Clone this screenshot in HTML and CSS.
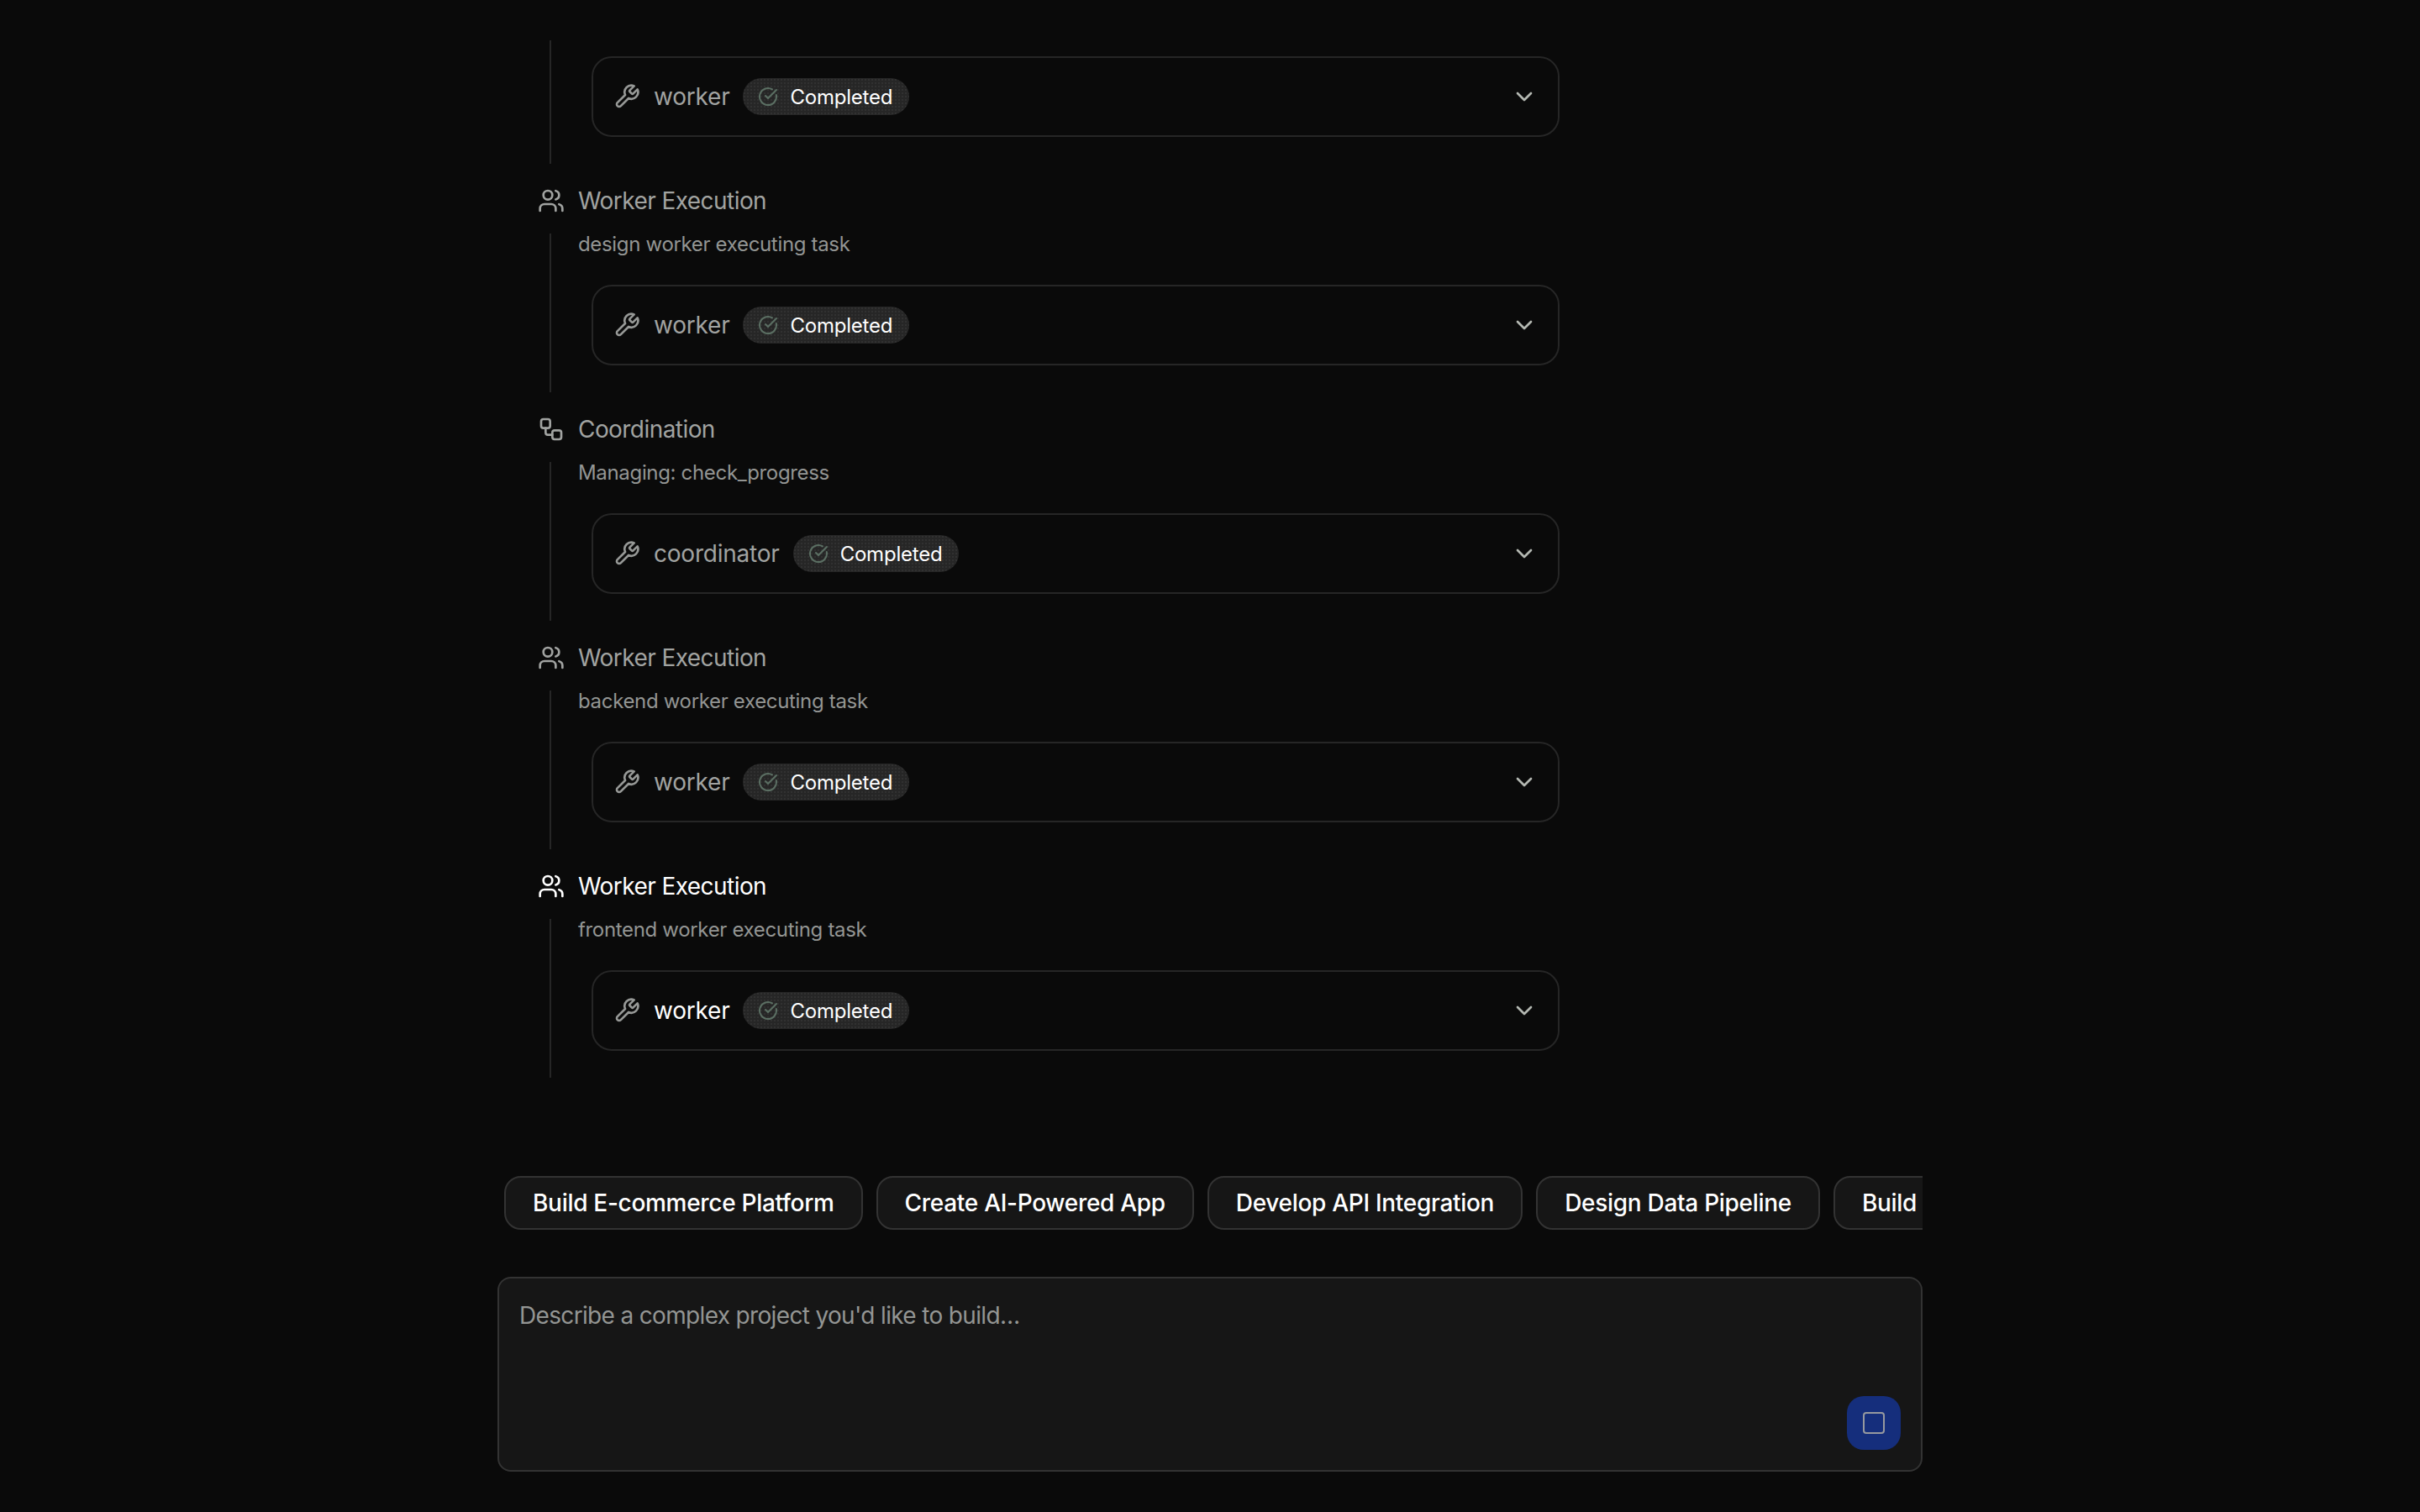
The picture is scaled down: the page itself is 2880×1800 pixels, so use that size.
FILE: index.html
```html
<!DOCTYPE html>
<html lang="en">
<head>
<meta charset="utf-8">
<title>Project builder</title>
<link rel="stylesheet" href="styles.css">
</head>
<body>
<svg class="defs" width="0" height="0" aria-hidden="true">
  <symbol id="i-wrench" viewBox="0 0 24 24"><path d="M14.7 6.3a1 1 0 0 0 0 1.4l1.6 1.6a1 1 0 0 0 1.4 0l3.77-3.77a6 6 0 0 1-7.94 7.94l-6.91 6.91a2.12 2.12 0 0 1-3-3l6.91-6.91a6 6 0 0 1 7.94-7.94l-3.76 3.76z"/></symbol>
  <symbol id="i-check" viewBox="0 0 24 24"><path d="M21.801 10A10 10 0 1 1 17 3.335"/><path d="m9 11 3 3L22 4"/></symbol>
  <symbol id="i-chev" viewBox="0 0 24 24"><path d="m6 9 6 6 6-6"/></symbol>
  <symbol id="i-users" viewBox="0 0 24 24"><path d="M16 21v-2a4 4 0 0 0-4-4H6a4 4 0 0 0-4 4v2"/><circle cx="9" cy="7" r="4"/><path d="M22 21v-2a4 4 0 0 0-3-3.87"/><path d="M16 3.13a4 4 0 0 1 0 7.75"/></symbol>
  <symbol id="i-flow" viewBox="0 0 24 24"><rect x="3" y="3" width="8" height="8" rx="2"/><path d="M7 11v4a2 2 0 0 0 2 2h4"/><rect x="13" y="13" width="8" height="8" rx="2"/></symbol>
</svg>
<main class="page">
  <div class="timeline">
    <section class="step">
      <div class="step-body first">
        <div class="card">
          <svg class="ico wrench"><use href="#i-wrench"/></svg><span class="tool">worker</span>
          <span class="pill"><svg class="ico check"><use href="#i-check"/></svg>Completed</span>
          <svg class="ico chev"><use href="#i-chev"/></svg>
        </div>
      </div>
    </section>
    <section class="step">
      <h3 class="step-head"><svg class="ico head-ico"><use href="#i-users"/></svg>Worker Execution</h3>
      <div class="step-body">
        <p class="sub">design worker executing task</p>
        <div class="card">
          <svg class="ico wrench"><use href="#i-wrench"/></svg><span class="tool">worker</span>
          <span class="pill"><svg class="ico check"><use href="#i-check"/></svg>Completed</span>
          <svg class="ico chev"><use href="#i-chev"/></svg>
        </div>
      </div>
    </section>
    <section class="step">
      <h3 class="step-head"><svg class="ico head-ico"><use href="#i-flow"/></svg>Coordination</h3>
      <div class="step-body">
        <p class="sub">Managing: check_progress</p>
        <div class="card">
          <svg class="ico wrench"><use href="#i-wrench"/></svg><span class="tool">coordinator</span>
          <span class="pill"><svg class="ico check"><use href="#i-check"/></svg>Completed</span>
          <svg class="ico chev"><use href="#i-chev"/></svg>
        </div>
      </div>
    </section>
    <section class="step">
      <h3 class="step-head"><svg class="ico head-ico"><use href="#i-users"/></svg>Worker Execution</h3>
      <div class="step-body">
        <p class="sub">backend worker executing task</p>
        <div class="card">
          <svg class="ico wrench"><use href="#i-wrench"/></svg><span class="tool">worker</span>
          <span class="pill"><svg class="ico check"><use href="#i-check"/></svg>Completed</span>
          <svg class="ico chev"><use href="#i-chev"/></svg>
        </div>
      </div>
    </section>
    <section class="step active">
      <h3 class="step-head"><svg class="ico head-ico"><use href="#i-users"/></svg>Worker Execution</h3>
      <div class="step-body">
        <p class="sub">frontend worker executing task</p>
        <div class="card">
          <svg class="ico wrench"><use href="#i-wrench"/></svg><span class="tool">worker</span>
          <span class="pill"><svg class="ico check"><use href="#i-check"/></svg>Completed</span>
          <svg class="ico chev"><use href="#i-chev"/></svg>
        </div>
      </div>
    </section>
  </div>
  <div class="composer">
    <div class="chips">
      <button class="chip">Build E-commerce Platform</button>
      <button class="chip">Create AI-Powered App</button>
      <button class="chip">Develop API Integration</button>
      <button class="chip">Design Data Pipeline</button>
      <button class="chip">Build</button>
    </div>
    <div class="input">
      <div class="placeholder">Describe a complex project you'd like to build…</div>
      <button class="stop" aria-label="Stop"><span class="stop-square"></span></button>
    </div>
  </div>
</main>
</body>
</html>
```
FILE: styles.css
```css
* { box-sizing: border-box; }
html, body { margin: 0; height: 100%; }
body {
  background: #0a0a0a;
  color: #fff;
  font-family: Inter, "Liberation Sans", sans-serif;
  overflow: hidden;
}
.defs { position: absolute; }
.page {
  width: 1696px;
  height: 1800px;
  margin: 0 auto;
  padding-top: 48px;
  display: flex;
  flex-direction: column;
}
.timeline {
  padding-left: 48px;
  width: 1264px;
  display: flex;
  flex-direction: column;
  gap: 24px;
}
.ico {
  fill: none;
  stroke: currentColor;
  stroke-width: 2;
  stroke-linecap: round;
  stroke-linejoin: round;
  flex: none;
}
.step-head {
  margin: 0 0 19px;
  height: 40px;
  display: flex;
  align-items: center;
  gap: 16px;
  font-size: 28px;
  font-weight: 400;
  letter-spacing: -0.56px;
  color: #a1a3a1;
}
.head-ico { width: 32px; height: 32px; }
.step-body {
  margin-left: 14px;
  border-left: 2px solid #262626;
  height: 189px;
  padding-left: 48px;
}
.step-body.first { height: 147px; padding-top: 19px; }
.sub {
  margin: 0 0 35px -16px;
  font-size: 24px;
  line-height: 26px;
  letter-spacing: -0.33px;
  color: #939593;
}
.card {
  width: 1152px;
  height: 96px;
  border: 2px solid #262626;
  border-radius: 24px;
  padding: 0 24px;
  display: flex;
  align-items: center;
}
.wrench { width: 32px; height: 32px; color: #969896; margin-right: 16px; }
.tool { font-size: 28px; letter-spacing: -0.22px; color: #a1a3a1; margin-right: 16px; }
.active .step-head, .active .tool { color: #fff; }
.pill {
  height: 44px;
  padding: 0 20px 0 18px;
  border-radius: 22px;
  display: inline-flex;
  align-items: center;
  gap: 14px;
  font-size: 24px;
  font-weight: 400;
  letter-spacing: -0.22px;
  color: #fff;
  background-color: #262626;
  background-image: radial-gradient(circle, rgba(255,255,255,.05) 1px, transparent 1px);
  background-size: 4px 4px;
}
.check { width: 24px; height: 24px; color: #5b6f63; }
.chev { width: 32px; height: 32px; margin-left: auto; color: #b4b8b2; }
.composer { margin-top: auto; padding-bottom: 48px; }
.chips {
  display: flex;
  gap: 16px;
  overflow: hidden;
  padding-left: 8px;
  margin-bottom: 56px;
}
.chip {
  flex: none;
  height: 64px;
  padding: 0 32px;
  border: 2px solid #333;
  border-radius: 20px;
  background: #161616;
  color: #fff;
  font: 500 28px Inter, "Liberation Sans", sans-serif;
  letter-spacing: -0.3px;
}
.input {
  height: 232px;
  border: 2px solid #333;
  border-radius: 16px;
  background: #161616;
  padding: 24px;
  display: flex;
  flex-direction: column;
}
.placeholder { font-size: 28px; line-height: 40px; letter-spacing: -0.66px; color: #939593; }
.stop {
  align-self: flex-end;
  margin-top: auto;
  width: 64px;
  height: 64px;
  border: 0;
  border-radius: 20px;
  background: #152e7c;
  display: flex;
  align-items: center;
  justify-content: center;
  padding: 0;
}
.stop-square {
  width: 26px;
  height: 26px;
  border: 2.5px solid #96999f;
  border-radius: 4px;
}
```
